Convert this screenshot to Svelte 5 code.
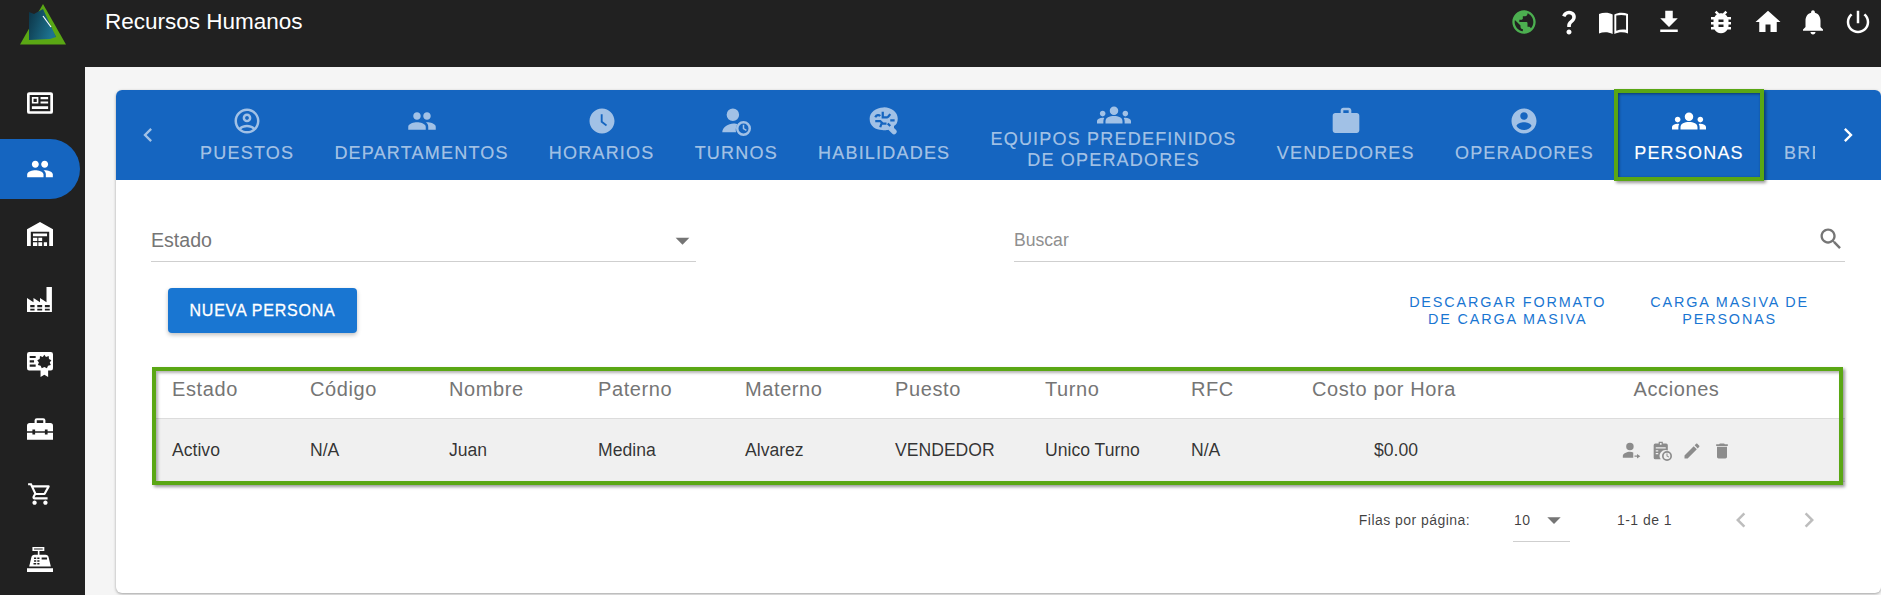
<script>
  const P = {
    globe: 'M12 2C6.48 2 2 6.48 2 12s4.48 10 10 10 10-4.48 10-10S17.52 2 12 2zm-1 17.93c-3.95-.49-7-3.85-7-7.93 0-.62.08-1.21.21-1.79L9 15v1c0 1.1.9 2 2 2v1.93zm6.9-2.54c-.26-.81-1-1.39-1.9-1.39h-1v-3c0-.55-.45-1-1-1H8v-2h2c.55 0 1-.45 1-1V7h2c1.1 0 2-.9 2-2v-.41c2.93 1.19 5 4.06 5 7.41 0 2.08-.8 3.97-2.1 5.39z',
    question: 'M11.07 12.85c.77-1.39 2.25-2.21 3.11-3.44.91-1.29.4-3.7-2.18-3.7-1.69 0-2.52 1.28-2.87 2.34L6.54 6.96C7.25 4.83 9.18 3 11.99 3c2.35 0 3.96 1.07 4.78 2.41.7 1.15 1.11 3.3.03 4.9-1.2 1.77-2.35 2.31-2.97 3.45-.25.46-.35.76-.35 2.24h-2.89c-.01-.78-.13-2.05.48-3.15zM14 20c0 1.1-.9 2-2 2s-2-.9-2-2 .9-2 2-2 2 .9 2 2z',
    book: 'M0 5c3.5-1.4 8-1.4 11.3.4V21.5C8 19.8 3.5 19.6 0 21zM12.7 5.4C16 3.6 20.5 3.6 24 5v16c-3.5-1.4-8-1.2-11.3.5zM14.3 6.3v12.5c2.7-1 5.8-1.2 8.1-.7V6.2c-2.6-.6-5.7-.6-8.1.1z',
    download: 'M19 9h-4V3H9v6H5l7 7 7-7zM5 18v2h14v-2H5z',
    bug: 'M20 8h-2.81c-.45-.78-1.07-1.45-1.82-1.96L17 4.41 15.59 3l-2.17 2.17C12.96 5.06 12.49 5 12 5c-.49 0-.96.06-1.41.17L8.41 3 7 4.41l1.62 1.63C7.88 6.55 7.26 7.22 6.81 8H4v2h2.09c-.05.33-.09.66-.09 1v1H4v2h2v1c0 .34.04.67.09 1H4v2h2.81c1.04 1.79 2.97 3 5.19 3s4.15-1.21 5.19-3H20v-2h-2.09c.05-.33.09-.66.09-1v-1h2v-2h-2v-1c0-.34-.04-.67-.09-1H20V8zm-6 8h-4v-2h4v2zm0-4h-4v-2h4v2z',
    home: 'M10 20v-6h4v6h5v-8h3L12 3 2 12h3v8z',
    bell: 'M12 22c1.1 0 2-.9 2-2h-4c0 1.1.89 2 2 2zm6-6v-5c0-3.07-1.64-5.64-4.5-6.32V4c0-.83-.67-1.5-1.5-1.5s-1.5.67-1.5 1.5v.68C7.63 5.36 6 7.92 6 11v5l-2 2v1h16v-1l-2-2z',
    power: 'M13 3h-2v10h2V3zm4.83 2.17l-1.42 1.42C17.99 7.86 19 9.81 19 12c0 3.87-3.13 7-7 7s-7-3.13-7-7c0-2.19 1.01-4.14 2.58-5.42L6.17 5.17C4.23 6.82 3 9.26 3 12c0 4.97 4.03 9 9 9s9-4.03 9-9c0-2.74-1.23-5.18-3.17-6.83z',
    people: 'M16 11c1.66 0 2.99-1.34 2.99-3S17.66 5 16 5c-1.66 0-3 1.34-3 3s1.34 3 3 3zm-8 0c1.66 0 2.99-1.34 2.99-3S9.66 5 8 5C6.34 5 5 6.34 5 8s1.34 3 3 3zm0 2c-2.33 0-7 1.17-7 3.5V19h14v-2.5c0-2.33-4.67-3.5-7-3.5zm8 0c-.29 0-.62.02-.97.05 1.16.84 1.97 1.97 1.97 3.45V19h6v-2.5c0-2.33-4.67-3.5-7-3.5z',
    groups: 'M12 12.75c1.63 0 3.07.39 4.24.9 1.08.48 1.76 1.56 1.76 2.73V18H6v-1.61c0-1.18.68-2.26 1.76-2.73 1.17-.52 2.61-.91 4.24-.91zM4 13c1.1 0 2-.9 2-2s-.9-2-2-2-2 .9-2 2 .9 2 2 2zm1.13 1.1c-.37-.06-.74-.1-1.13-.1-.99 0-1.93.21-2.78.58C.48 14.9 0 15.62 0 16.43V18h4.5v-1.61c0-.83.23-1.61.63-2.29zM20 13c1.1 0 2-.9 2-2s-.9-2-2-2-2 .9-2 2 .9 2 2 2zm4 3.43c0-.81-.48-1.53-1.22-1.85-.85-.37-1.79-.58-2.78-.58-.39 0-.76.04-1.13.1.4.68.63 1.46.63 2.29V18H24v-1.57zM12 6c1.66 0 3 1.34 3 3s-1.34 3-3 3-3-1.34-3-3 1.34-3 3-3z',
    account: 'M12 2C6.48 2 2 6.48 2 12s4.48 10 10 10 10-4.48 10-10S17.52 2 12 2zm0 3c1.66 0 3 1.34 3 3s-1.34 3-3 3-3-1.34-3-3 1.34-3 3-3zm0 14.2c-2.5 0-4.71-1.28-6-3.22.03-1.99 4-3.08 6-3.08 1.99 0 5.97 1.09 6 3.08-1.29 1.94-3.5 3.22-6 3.22z',
    accountLine: 'M12 2C6.48 2 2 6.48 2 12s4.48 10 10 10 10-4.48 10-10S17.52 2 12 2zM7.35 18.5C8.66 17.56 10.26 17 12 17s3.34.56 4.65 1.5C15.34 19.44 13.74 20 12 20s-3.34-.56-4.65-1.5zm10.79-1.38C16.45 15.8 14.32 15 12 15s-4.45.8-6.14 2.12C4.7 15.73 4 13.95 4 12c0-4.42 3.58-8 8-8s8 3.58 8 8c0 1.95-.7 3.73-1.86 5.12zM12 6c-1.93 0-3.5 1.57-3.5 3.5S10.07 13 12 13s3.5-1.57 3.5-3.5S13.93 6 12 6zm0 5c-.83 0-1.5-.67-1.5-1.5S11.17 8 12 8s1.5.67 1.5 1.5S12.83 11 12 11z',
    clock: 'M12 2C6.5 2 2 6.5 2 12s4.5 10 10 10 10-4.5 10-10S17.5 2 12 2zm3.2 14.2L11 13V6.5h1.5v5.7l3.5 2.7-.8 1.3z',
    personClock: 'M4.5 7a5 5 0 1 0 10 0a5 5 0 1 0-10 0zM1 21c0-4 5-7 9-7 1.5 0 2.7.3 3.4.6C12 16 11.5 18.5 12 21zM12 18a6 6 0 1 0 12 0a6 6 0 1 0-12 0zM14 18a4 4 0 1 1 8 0a4 4 0 1 1-8 0zM17.4 15h1.2v2.7l2 1.2-.6 1-2.6-1.6z',
    brain: 'M12 1c6 0 11 4 11 9 0 3-1 5-3 6v1.5l1.5 1.5a2 2 0 0 1-3 3l-3-3c-1 .3-3 .5-5 .2-5 0-10-3-10-9 0-5 5-9 11-9z',
    work: 'M20 6h-4V4c0-1.11-.89-2-2-2h-4c-1.11 0-2 .89-2 2v2H4c-1.11 0-1.99.89-1.99 2L2 19c0 1.11.89 2 2 2h16c1.11 0 2-.89 2-2V8c0-1.11-.89-2-2-2zm-6 0h-4V4h4v2z',
    search: 'M15.5 14h-.79l-.28-.27C15.41 12.59 16 11.11 16 9.5 16 5.91 13.09 3 9.5 3S3 5.91 3 9.5 5.91 16 9.5 16c1.61 0 3.09-.59 4.23-1.57l.27.28v.79l5 4.99L20.49 19l-4.99-5zm-6 0C7.01 14 5 11.99 5 9.5S7.01 5 9.5 5 14 7.01 14 9.5 11.99 14 9.5 14z',
    edit: 'M3 17.25V21h3.75L17.81 9.94l-3.75-3.75L3 17.25zM20.71 7.04c.39-.39.39-1.02 0-1.41l-2.34-2.34c-.39-.39-1.02-.39-1.41 0l-1.83 1.83 3.75 3.75 1.83-1.83z',
    trash: 'M6 19c0 1.1.9 2 2 2h8c1.1 0 2-.9 2-2V7H6v12zM19 4h-3.5l-1-1h-5l-1 1H5v2h14V4z',
    left: 'M15.41 7.41L14 6l-6 6 6 6 1.41-1.41L10.83 12z',
    right: 'M10 6L8.59 7.41 13.17 12l-4.58 4.59L10 18l6-6z',
    drop: 'M7 10l5 5 5-5z',
    news: 'M2 2h20a2 2 0 0 1 2 2v16a2 2 0 0 1-2 2H2a2 2 0 0 1-2-2V4a2 2 0 0 1 2-2zM2.5 4.5v15h19v-15zM4.5 6.5h6v6h-6zM6 8v3h3V8zM12.5 6.5h7v2h-7zM12.5 10.5h7v2h-7zM4.5 15h15v2.5h-15z',
    warehouse: 'M0 7.5L12 1l12 6.5V23h-3.5V10h-17v13H0zM5.5 11.5h13V14h-13zM5.5 15.5h4v3h-4zM10.5 15.5h3.5v3h-3.5zM5.5 19.5h4V23h-4zM10.5 19.5h3.5V23h-3.5zM15.5 19.5h3V23h-3z',
    factory: 'M0 24V11l6 4v-4l6 4v-4l6 4V1h5v23zM3 17.5v2h4v-2zM9.5 17.5v2H14v-2zM16.5 17.5v2H21v-2zM3 21v1.5h4V21zM9.5 21v1.5H14V21zM16.5 21v1.5H21V21z',
    seal: 'M2 1h20a2 2 0 0 1 2 2v13a2 2 0 0 1-2 2h-2.5v6L16 22l-3.5 2v-6H2a2 2 0 0 1-2-2V3a2 2 0 0 1 2-2zM2.5 4.5v2H8v-2zM2.5 8.5v2h4v-2zM2.5 12.5v2H8v-2zM16 3.5l1.5 2 2.5-.8.3 2.6 2.2 1.2-1.5 2.2 1 2.3-2.6.5-1 2.5-2.4-1.3-2.4 1.3-1-2.5-2.6-.5 1-2.3-1.5-2.2 2.2-1.2.3-2.6 2.5.8z',
    toolbox: 'M0 9a2.5 2.5 0 0 1 2.5-2.5H7V4a2 2 0 0 1 2-2h6a2 2 0 0 1 2 2v2.5h4.5A2.5 2.5 0 0 1 24 9v5h-5v-1.5h-2.5V14h-9v-1.5H5V14H0zM9 4v2.5h6V4zM0 15.5h5V17h2.5v-1.5h9V17H19v-1.5h5V22H0z',
    cart: 'M15.55 13c.75 0 1.41-.41 1.75-1.03l3.58-6.49c.37-.66-.11-1.48-.87-1.48H5.21l-.94-2H1v2h2l3.6 7.59-1.35 2.44C4.52 15.37 5.48 17 7 17h12v-2H7l1.1-2h7.45zM6.16 6h12.15l-2.76 5H8.53L6.16 6zM7 18c-1.1 0-1.99.9-1.99 2S5.9 22 7 22s2-.9 2-2-.9-2-2-2zm10 0c-1.1 0-1.99.9-1.99 2s.89 2 1.99 2 2-.9 2-2-.9-2-2-2z',
    register: 'M5 1h11v3.5h-4.5V8H17a3 3 0 0 1 3 2.5l2 8.5H2l2-8.5A3 3 0 0 1 7 8h3V4.5H5zM6.5 2.2v1.1h8V2.2zM6.5 10.5V12h2v-1.5zM9.5 10.5V12h2v-1.5zM13.5 10.5v2h5v-2zM6.5 13.2v1.3h2v-1.3zM9.5 13.2v1.3h2v-1.3zM6 15.7V17h2.5v-1.3zM9.5 15.7V17h2v-1.3zM0 20.5h24V24H0z',
    moveUser: 'M5 6.5a4.5 4.5 0 1 0 9 0a4.5 4.5 0 1 0-9 0zM1 20v-2c0-3 5-5 8.5-5 1.5 0 3 .4 4 .9V20zM18 15.5v2h-3V19h3v2l4-2.75z',
    schedule: 'M4 3h4V1h5v2h4a2 2 0 0 1 2 2v6.5A7 7 0 0 0 10.5 22H4a2 2 0 0 1-2-2V5a2 2 0 0 1 2-2zM9.5 2.5v2h2v-2zM4.5 7.5V9h12V7.5zM4.5 11v1.5h3V11zM4.5 14.5V16h3v-1.5zM12 18a6 6 0 1 0 12 0a6 6 0 1 0-12 0zM14 18a4 4 0 1 1 8 0a4 4 0 1 1-8 0zM17.4 15h1.2v2.7l2 1.2-.6 1-2.6-1.6z'
  }

  const sideIcons = ['news', 'people', 'warehouse', 'factory', 'seal', 'toolbox', 'cart', 'register']
  const topIcons = ['globe', 'question', 'book', 'download', 'bug', 'home', 'bell', 'power']

  const tabs = [
    { icon: 'accountLine', lines: ['PUESTOS'] },
    { icon: 'people', lines: ['DEPARTAMENTOS'] },
    { icon: 'clock', lines: ['HORARIOS'] },
    { icon: 'personClock', lines: ['TURNOS'] },
    { icon: 'brain', lines: ['HABILIDADES'] },
    { icon: 'groups', lines: ['EQUIPOS PREDEFINIDOS', 'DE OPERADORES'] },
    { icon: 'work', lines: ['VENDEDORES'] },
    { icon: 'account', lines: ['OPERADORES'] },
    { icon: 'groups', lines: ['PERSONAS'], active: true },
    { icon: 'clock', lines: ['BREAKS DE PERSONAL'] }
  ]

  const headers = ['Estado', 'Código', 'Nombre', 'Paterno', 'Materno', 'Puesto', 'Turno', 'RFC', 'Costo por Hora', 'Acciones']
  const row = ['Activo', 'N/A', 'Juan', 'Medina', 'Alvarez', 'VENDEDOR', 'Unico Turno', 'N/A', '$0.00']
  const actions = ['moveUser', 'schedule', 'edit', 'trash']
</script>

{#snippet icon(name)}
  <svg class={name} viewBox="0 0 24 24" aria-hidden="true">
    <path fill-rule="evenodd" d={P[name]} />
    {#if name === 'brain'}
      <path class="squiggle" d="M5 9c1-2 3-2 4-1M5 12h4l2 2h3M11 4.5V9h4M15 9l2-2.5M17 11.5h3.5M9 17l1-3M15 14l2 2" />
    {/if}
  </svg>
{/snippet}

<div class="app">
  <header class="top">
    <div class="logo">
      <svg viewBox="0 0 46 41" aria-hidden="true">
        <defs>
          <linearGradient id="lg" x1="0" y1="0" x2="1" y2="0.4">
            <stop offset="0" stop-color="#0c3345" />
            <stop offset="1" stop-color="#1d7390" />
          </linearGradient>
        </defs>
        <path d="M23 0L46 40.5H0z" fill="#5aa714" />
        <path d="M23 10L36 33H9z" fill="#1d3a2a" />
        <path d="M9 8l5 2 9-5 13 28-6 2-21 1z" fill="url(#lg)" />
        <path d="M23 12l8 11" stroke="#fff" stroke-width="1.2" />
      </svg>
    </div>
    <h1>Recursos Humanos</h1>
    <nav class="top-icons">
      {#each topIcons as name}
        <span class="top-icon {name}">{@render icon(name)}</span>
      {/each}
    </nav>
  </header>

  <div class="below">
    <aside class="side">
      {#each sideIcons as name, i}
        <div class="side-item" class:active={i === 1}>{@render icon(name)}</div>
      {/each}
    </aside>

    <main>
      <section class="card">
        <div class="tabbar">
          <div class="scroll-btn prev">{@render icon('left')}</div>
          <div class="tabs">
            {#each tabs as tab}
              <div class="tab" class:active={tab.active} class:two={tab.lines.length > 1}>
                {@render icon(tab.icon)}
                <span class="label">
                  {#each tab.lines as line}<span>{line}</span>{/each}
                </span>
              </div>
            {/each}
          </div>
          <div class="scroll-btn next">{@render icon('right')}</div>
        </div>

        <div class="body">
          <div class="filters">
            <div class="field estado">
              <span>Estado</span>
              {@render icon('drop')}
            </div>
            <div class="field buscar">
              <span>Buscar</span>
              {@render icon('search')}
            </div>
          </div>

          <div class="actions-row">
            <button class="primary">NUEVA PERSONA</button>
            <a class="link">DESCARGAR FORMATO<br />DE CARGA MASIVA</a>
            <a class="link">CARGA MASIVA DE<br />PERSONAS</a>
          </div>

          <div class="table">
            <div class="grid head">
              {#each headers as h}<div>{h}</div>{/each}
            </div>
            <div class="grid data">
              {#each row as cell}<div>{cell}</div>{/each}
              <div class="row-actions">
                {#each actions as a}{@render icon(a)}{/each}
              </div>
            </div>
          </div>

          <div class="pager">
            <span class="rows">Filas por página:</span>
            <div class="per-page">
              <span>10</span>
              {@render icon('drop')}
            </div>
            <span class="range">1-1 de 1</span>
            <span class="page-btn first">{@render icon('left')}</span>
            <span class="page-btn">{@render icon('right')}</span>
          </div>
        </div>
      </section>
    </main>
  </div>
</div>

<style>
  :global(body) {
    margin: 0;
    background: #f5f5f5;
  }

  .app {
    width: 1881px;
    height: 595px;
    overflow: hidden;
    display: flex;
    flex-direction: column;
    font-family: "Liberation Sans", Arial, sans-serif;
    color: rgba(0, 0, 0, .87);
  }

  svg {
    display: block;
    fill: currentColor;
    flex: none;
  }

  /* top bar */
  .top {
    height: 67px;
    flex: none;
    background: #212121;
    color: #fff;
    display: flex;
    align-items: flex-start;
  }
  .logo {
    width: 105px;
    flex: none;
    padding: 4px 0 0 20px;
    box-sizing: border-box;
  }
  .logo svg {
    width: 46px;
    height: 41px;
  }
  h1 {
    margin: 9px 0 0;
    font-size: 22.5px;
    line-height: 26px;
    font-weight: 400;
  }
  .top-icons {
    margin-left: auto;
    padding: 7px 1px 0 0;
    display: flex;
  }
  .top-icon {
    width: 45px;
    height: 30px;
    display: flex;
    justify-content: center;
    align-items: center;
  }
  .top-icon svg {
    width: 30px;
    height: 30px;
  }
  .top-icon.globe {
    color: #4caf50;
  }
  .top-icon.globe svg {
    width: 28px;
    height: 28px;
  }
  .top-icon.book svg {
    width: 29px;
    height: 29px;
  }
  .top-icon.download {
    margin-left: 10px;
  }
  .top-icon.bug {
    margin-left: 7px;
  }
  .top-icon.home {
    margin-left: 2px;
  }

  .below {
    flex: 1;
    display: flex;
    min-height: 0;
  }

  /* sidebar */
  .side {
    width: 85px;
    flex: none;
    background: #212121;
    color: #fff;
    padding-top: 3px;
    box-sizing: border-box;
  }
  .side-item {
    height: 65px;
    width: 80px;
    display: flex;
    justify-content: center;
    align-items: center;
    box-sizing: border-box;
  }
  .side-item svg {
    width: 26px;
    height: 26px;
  }
  .side-item.active {
    background: #1565c0;
    height: 60px;
    margin: 4px 0 2px;
    border-radius: 0 30px 30px 0;
  }
  .side-item.active svg {
    width: 28px;
    height: 28px;
  }

  /* card */
  main {
    flex: 1;
    min-width: 0;
    padding: 23px 0 0 31px;
    background: #f5f5f5;
  }
  .card {
    height: 503px;
    background: #fff;
    border-radius: 6px;
    box-shadow: 0 1px 3px rgba(0, 0, 0, .35);
  }

  .tabbar {
    height: 90px;
    background: #1565c0;
    border-radius: 6px 6px 0 0;
    display: flex;
    color: rgba(255, 255, 255, .6);
  }
  .scroll-btn {
    flex: none;
    display: flex;
    justify-content: center;
    align-items: center;
  }
  .scroll-btn svg {
    width: 28px;
    height: 28px;
  }
  .scroll-btn.prev {
    width: 64px;
    padding-right: 1px;
    box-sizing: border-box;
  }
  .scroll-btn.next {
    width: 66px;
    color: #fff;
  }
  .tabs {
    flex: 1;
    min-width: 0;
    display: flex;
    overflow-x: clip;
  }
  .tab {
    position: relative;
    flex: none;
    padding: 0 20.1px;
    height: 90px;
    display: flex;
    flex-direction: column;
    align-items: center;
    justify-content: center;
  }
  .tab svg {
    width: 30px;
    height: 30px;
  }
  .tab svg.work {
    width: 32px;
    height: 32px;
    margin: -1px 0;
  }
  .tab svg.groups {
    width: 34px;
    height: 34px;
    margin: -2px 0;
  }
  .label {
    margin-top: 7px;
    display: flex;
    flex-direction: column;
    align-items: center;
    font-size: 18px;
    line-height: 21px;
    letter-spacing: 1.2px;
    white-space: nowrap;
    -webkit-text-stroke: .15px currentColor;
  }
  .tab.two .label {
    margin-top: -1px;
  }
  .tab.active {
    color: #fff;
  }
  .tab.active::after {
    content: '';
    position: absolute;
    inset: -1px 0;
    border: 4px solid #5aa714;
    box-shadow: 2px 2px 3px rgba(0, 0, 0, .4), inset 1px 1px 3px rgba(0, 0, 0, .45);
  }
  .squiggle {
    fill: none;
    stroke: #1565c0;
    stroke-width: 1.8;
  }

  .body {
    padding: 0 36px 0 35px;
  }

  /* filters */
  .filters {
    padding-top: 40px;
    display: grid;
    grid-template-columns: 545px 1fr;
    column-gap: 318px;
  }
  .field {
    height: 42px;
    box-sizing: border-box;
    border-bottom: 1px solid #cfcfcf;
    display: flex;
    justify-content: space-between;
    align-items: center;
  }
  .estado {
    font-size: 19.6px;
    color: #757575;
  }
  .estado svg {
    width: 33px;
    height: 33px;
    margin-right: -3px;
  }
  .buscar {
    font-size: 17.6px;
    color: #8f8f8f;
  }
  .buscar svg {
    width: 28px;
    height: 28px;
    color: #757575;
    margin-bottom: 4px;
  }

  .actions-row {
    margin-top: 26px;
    padding-left: 17px;
    display: flex;
    align-items: flex-start;
  }
  .primary {
    width: 189px;
    height: 45px;
    border: 0;
    border-radius: 4px;
    background: #1976d2;
    color: #fff;
    font: 400 16px "Liberation Sans", Arial, sans-serif;
    letter-spacing: .8px;
    -webkit-text-stroke: .3px currentColor;
    box-shadow: 0 2px 4px rgba(0, 0, 0, .25);
  }
  .link {
    margin-top: 6px;
    margin-left: 44px;
    text-align: center;
    color: #1976d2;
    font-size: 14.4px;
    line-height: 17px;
    letter-spacing: 1.85px;
  }
  .primary + .link {
    margin-left: auto;
  }
  .link:last-child {
    margin-right: 36px;
  }

  /* table */
  .table {
    margin: 34px 0 0 1px;
    position: relative;
  }
  .table::after {
    content: '';
    position: absolute;
    inset: 0 2px -3px 0;
    border: 4px solid #5aa714;
    box-shadow: 2px 2px 3px rgba(0, 0, 0, .4), inset 2px 2px 3px rgba(0, 0, 0, .3);
    pointer-events: none;
  }
  .grid {
    display: grid;
    grid-template-columns: 138px 139px 149px 147px 150px 150px 146px 121px 168px 1fr;
    padding-left: 20px;
  }
  .head {
    height: 52px;
    box-sizing: border-box;
    padding-top: 10px;
    font-size: 20px;
    line-height: 24px;
    letter-spacing: .6px;
    color: #757575;
    border-bottom: 1px solid #dcdcdc;
  }
  .head div:last-child {
    text-align: center;
    padding-left: 28px;
  }
  .data {
    height: 63px;
    box-sizing: border-box;
    background: #f0f0f0;
    align-items: center;
    font-size: 17.6px;
    color: rgba(0, 0, 0, .8);
    padding-top: 1px;
    border-bottom: 1px solid #dcdcdc;
  }
  .data div:nth-child(9) {
    text-align: center;
  }
  .row-actions {
    display: flex;
    justify-content: center;
    gap: 10px;
    padding: 1px 0 0 28px;
    color: #8c8c8c;
  }
  .row-actions svg {
    width: 20px;
    height: 20px;
  }

  /* pagination */
  .pager {
    margin-top: 21px;
    padding-right: 21px;
    display: flex;
    justify-content: flex-end;
    align-items: center;
    font-size: 14px;
    letter-spacing: .45px;
    height: 34px;
    color: rgba(0, 0, 0, .75);
  }
  .per-page {
    width: 57px;
    height: 40px;
    margin: 4px 0 0 43px;
    padding: 0 0 3px 1px;
    box-sizing: border-box;
    border-bottom: 1px solid #cfcfcf;
    display: flex;
    justify-content: space-between;
    align-items: center;
  }
  .per-page svg {
    width: 32px;
    height: 32px;
    color: #757575;
  }
  .range {
    margin-left: 47px;
  }
  .page-btn {
    margin-left: 38px;
    color: #bdbdbd;
  }
  .page-btn.first {
    margin-left: 54px;
  }
  .page-btn svg {
    width: 30px;
    height: 30px;
  }
</style>
